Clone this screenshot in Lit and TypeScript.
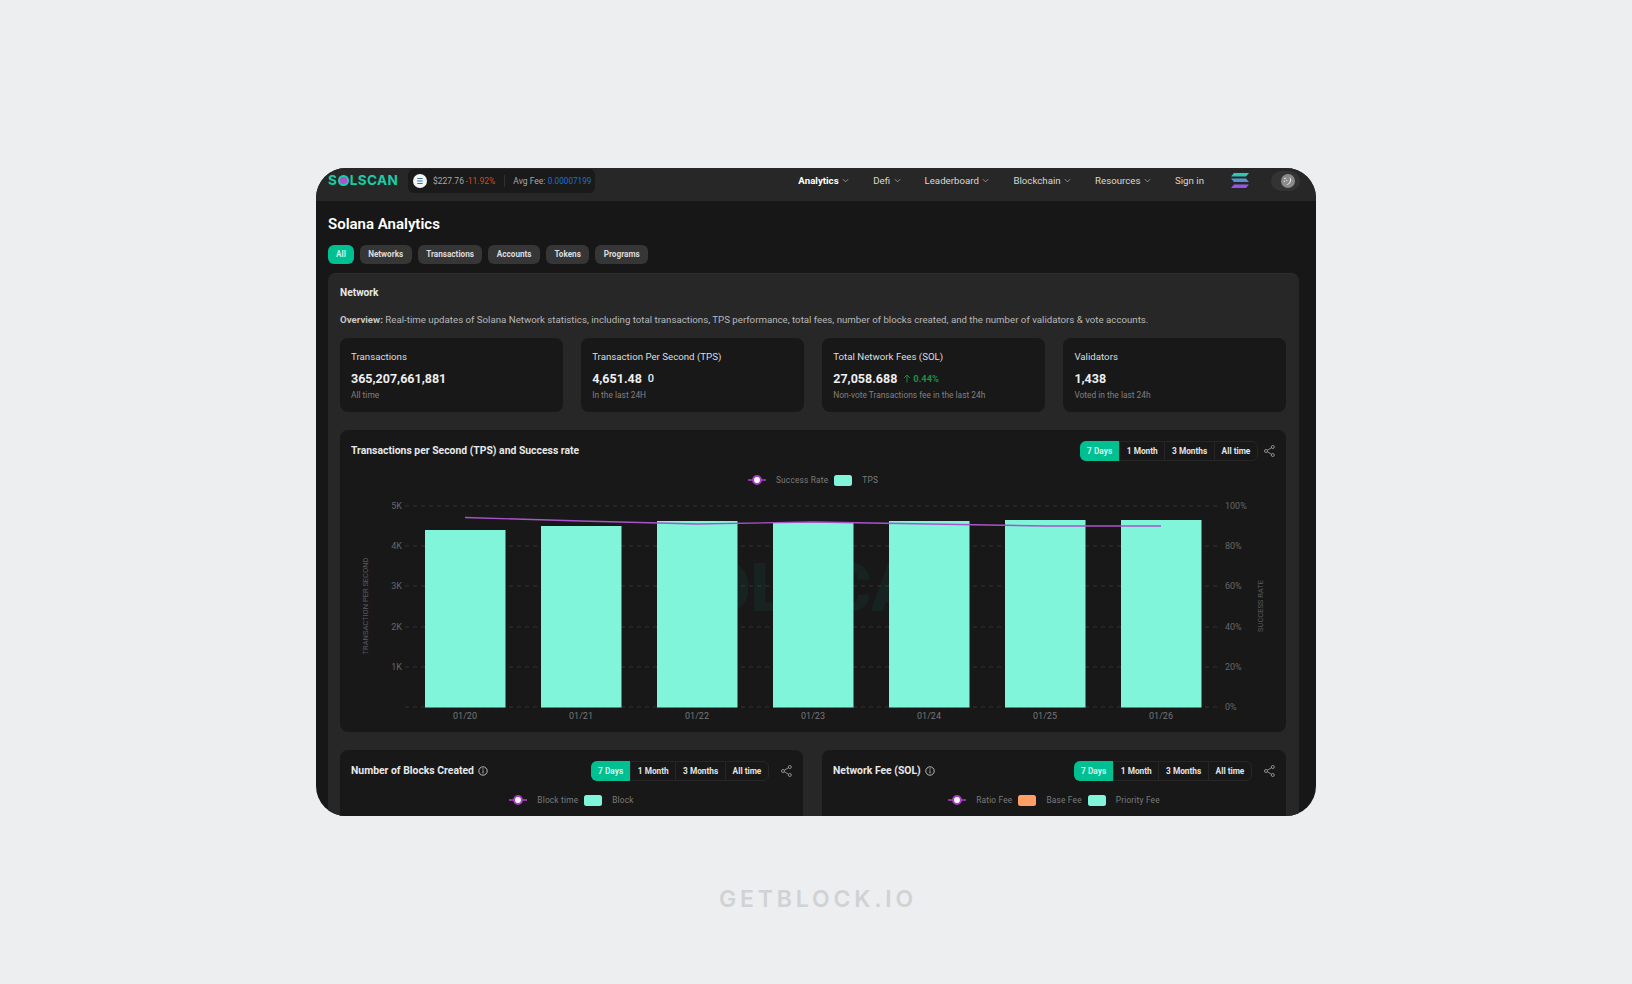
import { LitElement, html, css, svg } from "lit";
import { customElement } from "lit/decorators.js";

const chevron = html`<svg class="chev" viewBox="0 0 8 8" width="7" height="7"><path d="M1 2.5 L4 5.5 L7 2.5" fill="none" stroke="currentColor" stroke-width="1"/></svg>`;
const share = html`<svg class="share" viewBox="0 0 11 12" width="11" height="12"><g fill="none" stroke="#9a9a9a" stroke-width="0.9"><circle cx="8.8" cy="2" r="1.5"/><circle cx="2" cy="6" r="1.5"/><circle cx="8.8" cy="10" r="1.5"/><path d="M3.4 5.2 L7.4 2.8 M3.4 6.8 L7.4 9.2"/></g></svg>`;
const info = html`<svg class="info" viewBox="0 0 10 10" width="10" height="10"><g fill="none" stroke="#c8c8c8" stroke-width="0.9"><circle cx="5" cy="5" r="4.2"/><path d="M5 4.4 V7.4"/></g><circle cx="5" cy="2.9" r="0.6" fill="#c8c8c8"/></svg>`;
const marker = html`<svg class="marker" viewBox="0 0 18 10" width="18" height="10"><path d="M0 5 H18" stroke="#a83fc4" stroke-width="1.6"/><circle cx="9" cy="5" r="3.9" fill="#fff" stroke="#a83fc4" stroke-width="2"/></svg>`;

const range = html`<div class="range-wrap"><div class="range"><span class="on">7 Days</span><span>1 Month</span><span>3 Months</span><span>All time</span></div>${share}</div>`;

const bars = [
  [465, 531], [581, 527], [697, 522], [813, 523.5], [929, 522], [1045, 521], [1161, 521],
];
const line = "465,518.5 581,522 697,525 813,523 929,525 1045,527 1161,527";
const leftTicks: [string, number][] = [["5K", 507], ["4K", 547], ["3K", 587], ["2K", 628], ["1K", 668]];
const rightTicks: [string, number][] = [["100%", 507], ["80%", 547], ["60%", 587], ["40%", 628], ["20%", 668], ["0%", 708]];
const dates = ["01/20", "01/21", "01/22", "01/23", "01/24", "01/25", "01/26"];

const chart = svg`
  <svg class="plot" viewBox="340 489 946 244" width="946" height="244">
    ${rightTicks.map(([, y]) => svg`<line x1="405" x2="1220" y1=${y} y2=${y} stroke="#333" stroke-width="1" stroke-dasharray="4 4"/>`)}
    <text class="wm" x="813" y="612" text-anchor="middle">SOLSCAN</text>
    ${bars.map(([c, t]) => svg`<rect x=${c - 40} y=${t} width="80.5" height=${708.5 - t} fill="#80f5da"/>`)}
    <polyline points=${line} fill="none" stroke="#a954cc" stroke-width="1.4"/>
    ${leftTicks.map(([l, y]) => svg`<text class="tick" x="402" y=${y + 3} text-anchor="end">${l}</text>`)}
    ${rightTicks.map(([l, y]) => svg`<text class="tick" x="1225" y=${y + 3}>${l}</text>`)}
    ${dates.map((d, i) => svg`<text class="tick date" x=${465 + i * 116} y="720" text-anchor="middle">${d}</text>`)}
    <text class="axis" transform="translate(368 607) rotate(-90)" text-anchor="middle">TRANSACTION PER SECOND</text>
    <text class="axis" transform="translate(1263 607) rotate(-90)" text-anchor="middle">SUCCESS RATE</text>
  </svg>`;

@customElement("app-root")
export class AppRoot extends LitElement {
  static styles = css`
    :host { display: block; min-height: 984px; background: #eceef0; font-family: Roboto, "Liberation Sans", sans-serif; }
    .page { display: flex; flex-direction: column; align-items: center; padding-top: 168px; height: 816px; }
    .window { width: 1000px; height: 648px; border-radius: 30px; overflow: hidden; background: #171717; flex: none; color: #e6e6e6; }
    .mark { margin: 70px 0 0 4px; font: 600 23px Inter, sans-serif; letter-spacing: 3.8px; color: #d0d2d4; line-height: 26px; }

    header { height: 33px; box-sizing: border-box; padding-bottom: 8px; background: #272727; display: flex; align-items: center; font-size: 9.7px; }
    .logo { flex: none; margin-left: 12px; width: 72px; font: 700 13.5px/1 Inter, sans-serif; color: #17cfa4; letter-spacing: 0.4px; display: flex; align-items: center; white-space: nowrap; }
    .logo i { flex: none; box-sizing: border-box; width: 10.5px; height: 10.5px; border-radius: 50%; border: 2.4px solid #17cfa4; background: #b04fd0; margin: 0 1px; }
    .price { flex: none; margin-left: 8px; width: 187px; height: 24px; background: #1a1a1a; border-radius: 6px; display: flex; align-items: center; font-size: 8.5px; color: #a8a8a8; box-sizing: border-box; padding-left: 5px; white-space: nowrap; }
    .price svg { flex: none; margin-right: 6px; }
    .neg { color: #d9481f; margin-left: 1.5px; }
    .sep { width: 1px; height: 12px; background: #303030; margin: 0 8.5px; }
    .blue { color: #1d6fd6; margin-left: 2.5px; font-size: 8.2px; }
    nav { margin-left: auto; display: flex; align-items: center; color: #d8d8d8; gap: 24px; }
    nav span { display: flex; align-items: center; gap: 3.5px; }
    nav .act { color: #fff; font-weight: 700; }
    .chev { color: #a0a0a0; }
    .solana { flex: none; margin-left: 27px; }
    .toggle { flex: none; margin: 0 16px 0 22px; width: 29px; height: 20px; border-radius: 10px; background: #333; display: flex; align-items: center; justify-content: flex-end; padding-right: 5px; box-sizing: border-box; }

    main { padding: 0 17px 0 12px; }
    h1 { margin: 0; padding-top: 13px; font-size: 15px; font-weight: 600; line-height: 20px; color: #fff; }
    .tabs { display: flex; gap: 5.8px; margin-top: 11px; }
    .tabs span { height: 19px; padding: 0 8.5px; border-radius: 6px; background: #363636; font-size: 8.2px; font-weight: 700; line-height: 19px; color: #dcdcdc; }
    .tabs .on { background: #00c092; color: #c9f1e5; padding: 0 8px; }

    .panel { margin-top: 9px; background: #272727; border-radius: 8px 8px 0 0; padding: 12px 13px 0 12px; height: 600px; box-sizing: border-box; border-top: 1px solid #2f2f2f; }
    .panel h2 { margin: 0; font-size: 10.2px; font-weight: 700; line-height: 14px; color: #e8e8e8; }
    .over { margin: 13px 0 0; font-size: 9.7px; line-height: 14px; color: #b8b8b8; }
    .over b { color: #c8c8c8; }

    .stats { display: grid; grid-template-columns: repeat(4, 1fr); gap: 18.5px; margin-top: 11px; }
    .stat { height: 74px; background: #181818; border-radius: 8px; padding: 11.5px 11px 0; box-sizing: border-box; }
    .stat .l { font-size: 9.7px; line-height: 14px; color: #dedede; }
    .stat .v { display: flex; align-items: center; margin-top: 6px; font-size: 12.5px; font-weight: 700; line-height: 18px; color: #eee; }
    .stat .v em { font-style: normal; font-weight: 500; font-size: 11px; margin-left: 6px; }
    .stat .v .up { color: #1f8f4a; font-size: 9.3px; margin-left: 6px; display: flex; align-items: center; gap: 2px; }
    .stat .s { margin-top: 2.5px; font-size: 8.4px; line-height: 11px; color: #808080; }

    .card { background: #181818; border-radius: 8px; box-sizing: border-box; }
    .wide { margin-top: 18px; height: 302px; }
    .head { display: flex; justify-content: space-between; align-items: center; padding: 11px 11px 0; height: 20px; box-sizing: content-box; }
    .head h3 { margin: 0; font-size: 10.4px; font-weight: 700; line-height: 14px; color: #e8e8e8; display: flex; align-items: center; gap: 4px; }
    .range-wrap { display: flex; align-items: center; gap: 6px; }
    .duo .range-wrap { gap: 12px; }
    .range { display: flex; height: 20px; border: 1px solid #262626; border-radius: 6px; box-sizing: border-box; font-size: 8.3px; font-weight: 700; color: #e4e4e4; align-items: stretch; }
    .range span { display: flex; align-items: center; padding: 0 6.7px; border-left: 1px solid #262626; white-space: nowrap; }
    .range span:first-child { border-left: 0; }
    .range .on { background: #00c092; color: #d2f5ea; margin: -1px 0 -1px -1px; border-radius: 6px 0 0 6px; padding: 0 7px; }
    .legend { display: flex; justify-content: center; align-items: center; height: 16px; margin-top: 11px; font-size: 8.3px; color: #7c7c7c; letter-spacing: 0.2px; }
    .legend .sw { width: 18px; height: 11px; border-radius: 2.5px; margin: 0 10px 0 6px; }
    .legend .marker { flex: none; margin-right: 10px; }
    .plot { display: block; margin-top: 0; }
    .plot text { font-family: Roboto, "Liberation Sans", sans-serif; }
    .tick { font-size: 9px; fill: #666; }
    .date { fill: #777; }
    .axis { font-size: 7.5px; fill: #5c5c5c; }
    .wm { font-size: 66px; font-weight: 900; fill: #14c89e; opacity: 0.06; }

    .duo { display: grid; grid-template-columns: 463px 464px; gap: 19px; margin-top: 18px; }
    .duo .card { height: 120px; }
  `;

  private stat(l: string, v: unknown, s: string) {
    return html`<div class="stat"><div class="l">${l}</div><div class="v">${v}</div><div class="s">${s}</div></div>`;
  }

  render() {
    return html`
      <div class="page">
        <div class="window">
          <header>
            <div class="logo">S<i></i>LSCAN</div>
            <div class="price">
              <svg viewBox="0 0 14 14" width="14" height="14"><circle cx="7" cy="7" r="7" fill="#f2f4f6"/><g fill="#2f6fb0"><path d="M4.6 3.9 H10 L9.2 5 H3.9 Z"/><path d="M3.9 6.4 H9.2 L10 7.5 H4.6 Z"/><path d="M4.6 9 H10 L9.2 10.1 H3.9 Z"/></g></svg>
              <span>$227.76</span><span class="neg">-11.92%</span><span class="sep"></span><span>Avg Fee:</span><span class="blue">0.00007199</span>
            </div>
            <nav>
              <span class="act">Analytics ${chevron}</span>
              <span>Defi ${chevron}</span>
              <span>Leaderboard ${chevron}</span>
              <span>Blockchain ${chevron}</span>
              <span>Resources ${chevron}</span>
              <span>Sign in</span>
            </nav>
            <svg class="solana" viewBox="0 0 18 15" width="18" height="15">
              <defs><linearGradient id="sg" x1="0" y1="0" x2="0" y2="1"><stop offset="0" stop-color="#1fd8a8"/><stop offset="0.5" stop-color="#5c8fd0"/><stop offset="1" stop-color="#b03ff0"/></linearGradient></defs>
              <path fill="url(#sg)" d="M3 0 H18 L15 3.4 H0 Z M0 5.6 H15 L18 9 H3 Z M3 11.4 H18 L15 15 H0 Z"/>
            </svg>
            <div class="toggle">
              <svg viewBox="0 0 14 14" width="14" height="14"><circle cx="7" cy="7" r="7" fill="#8a8a8a"/><path d="M8.4 3 A4.3 4.3 0 0 1 5 10.6 A5 5 0 0 0 8.4 3 Z" fill="#f2f2f2"/><g fill="#f2f2f2"><circle cx="4" cy="4.5" r="0.8"/><circle cx="5.8" cy="6.3" r="0.6"/><circle cx="3.3" cy="7.4" r="0.6"/></g></svg>
            </div>
          </header>
          <main>
            <h1>Solana Analytics</h1>
            <div class="tabs">
              <span class="on">All</span><span>Networks</span><span>Transactions</span><span>Accounts</span><span>Tokens</span><span>Programs</span>
            </div>
            <section class="panel">
              <h2>Network</h2>
              <p class="over"><b>Overview:</b> Real-time updates of Solana Network statistics, including total transactions, TPS performance, total fees, number of blocks created, and the number of validators &amp; vote accounts.</p>
              <div class="stats">
                ${this.stat("Transactions", "365,207,661,881", "All time")}
                ${this.stat("Transaction Per Second (TPS)", html`4,651.48<em>0</em>`, "In the last 24H")}
                ${this.stat("Total Network Fees (SOL)", html`27,058.688<span class="up"><svg viewBox="0 0 8 9" width="8" height="9"><path d="M4 8.5 V1 M1 4 L4 1 L7 4" fill="none" stroke="#1f8f4a" stroke-width="0.9"/></svg>0.44%</span>`, "Non-vote Transactions fee in the last 24h")}
                ${this.stat("Validators", "1,438", "Voted in the last 24h")}
              </div>
              <div class="card wide">
                <div class="head"><h3>Transactions per Second (TPS) and Success rate</h3>${range}</div>
                <div class="legend">${marker}<span>Success Rate</span><i class="sw" style="background:#80f5da"></i><span>TPS</span></div>
                ${chart}
              </div>
              <div class="duo">
                <div class="card">
                  <div class="head"><h3>Number of Blocks Created ${info}</h3>${range}</div>
                  <div class="legend">${marker}<span>Block time</span><i class="sw" style="background:#80f5da"></i><span>Block</span></div>
                </div>
                <div class="card">
                  <div class="head"><h3>Network Fee (SOL) ${info}</h3>${range}</div>
                  <div class="legend">${marker}<span>Ratio Fee</span><i class="sw" style="background:#ff9f66"></i><span>Base Fee</span><i class="sw" style="background:#80f5da"></i><span>Priority Fee</span></div>
                </div>
              </div>
            </section>
          </main>
        </div>
        <div class="mark">GETBLOCK.IO</div>
      </div>
    `;
  }
}
